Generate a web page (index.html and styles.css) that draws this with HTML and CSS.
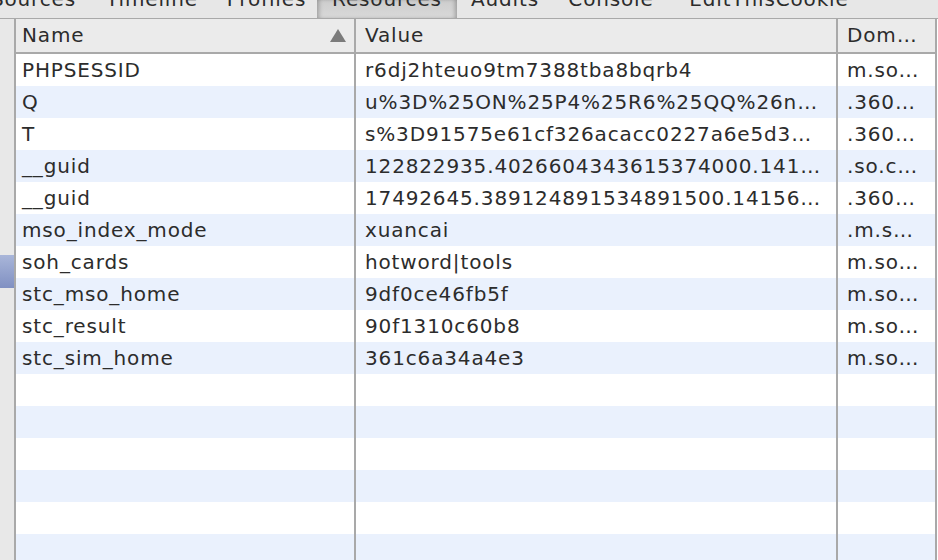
FILE: index.html
```
<!DOCTYPE html>
<html>
<head>
<meta charset="utf-8">
<link rel="stylesheet" href="styles.css">
</head>
<body>
<div class="tabs">
  <div class="tab t1">Sources</div>
  <div class="tab t2">Timeline</div>
  <div class="tab t3">Profiles</div>
  <div class="tab t4 active">Resources</div>
  <div class="tab t5">Audits</div>
  <div class="tab t6">Console</div>
  <div class="tab t7">EditThisCookie</div>
</div>
<div class="main">
  <div class="side"><div class="sel"></div></div>
  <div class="grid">
    <div class="row head">
      <div class="cell name">Name<svg class="sort" width="16" height="13" viewBox="0 0 16 13"><polygon points="8,0 16,13 0,13" fill="#7b7b7b"/></svg></div>
      <div class="cell">Value</div>
      <div class="cell">Dom…</div>
    </div>
    <div class="row"><div class="cell">PHPSESSID</div><div class="cell">r6dj2hteuo9tm7388tba8bqrb4</div><div class="cell">m.so.com</div></div>
    <div class="row"><div class="cell">Q</div><div class="cell">u%3D%25ON%25P4%25R6%25QQ%26n%3D%25FA%25B1</div><div class="cell">.360.cn</div></div>
    <div class="row"><div class="cell">T</div><div class="cell">s%3D91575e61cf326acacc0227a6e5d3085e%26t</div><div class="cell">.360.cn</div></div>
    <div class="row"><div class="cell">__guid</div><div class="cell">122822935.4026604343615374000.1415614537863.0</div><div class="cell">.so.com</div></div>
    <div class="row"><div class="cell">__guid</div><div class="cell">17492645.389124891534891500.1415614537874.0</div><div class="cell">.360.cn</div></div>
    <div class="row"><div class="cell">mso_index_mode</div><div class="cell">xuancai</div><div class="cell">.m.so.com</div></div>
    <div class="row"><div class="cell">soh_cards</div><div class="cell">hotword|tools</div><div class="cell">m.so.com</div></div>
    <div class="row"><div class="cell">stc_mso_home</div><div class="cell">9df0ce46fb5f</div><div class="cell">m.so.com</div></div>
    <div class="row"><div class="cell">stc_result</div><div class="cell">90f1310c60b8</div><div class="cell">m.so.com</div></div>
    <div class="row"><div class="cell">stc_sim_home</div><div class="cell">361c6a34a4e3</div><div class="cell">m.so.com</div></div>
    <div class="row"><div class="cell"></div><div class="cell"></div><div class="cell"></div></div>
    <div class="row"><div class="cell"></div><div class="cell"></div><div class="cell"></div></div>
    <div class="row"><div class="cell"></div><div class="cell"></div><div class="cell"></div></div>
    <div class="row"><div class="cell"></div><div class="cell"></div><div class="cell"></div></div>
    <div class="row"><div class="cell"></div><div class="cell"></div><div class="cell"></div></div>
    <div class="row"><div class="cell"></div><div class="cell"></div><div class="cell"></div></div>
  </div>
</div>
</body>
</html>
```
FILE: styles.css
```
html, body {
  margin: 0;
  padding: 0;
  width: 938px;
  height: 560px;
  overflow: hidden;
  background: #ffffff;
  font-family: "DejaVu Sans", sans-serif;
  font-size: 20px;
  letter-spacing: 0.85px;
  color: #2c2c2c;
}
.tabs {
  display: flex;
  height: 18px;
  overflow: hidden;
  background: #e7e7e7;
  border-bottom: 1px solid #a9a9a9;
  white-space: nowrap;
}
.tab {
  flex: none;
  text-align: center;
  line-height: 20px;
  height: 18px;
  overflow: hidden;
}
.tab::before {
  content: "";
  display: block;
  margin-top: -11px;
}
.t1 { width: 113px; margin-left: -25px; text-align: right; padding-right: 12px; box-sizing: border-box; }
.t2 { width: 128px; }
.t3 { width: 101px; }
.t4 { width: 140px; }
.t5 { width: 96px; }
.t6 { width: 116px; }
.t7 { width: 200px; }
.tab.active {
  background: linear-gradient(#cdcdcd, #d9d9d9);
  box-shadow: inset 4px 0 4px -2px rgba(0,0,0,0.25), inset -4px 0 4px -2px rgba(0,0,0,0.25);
}
.main {
  display: flex;
}
.side {
  flex: none;
  width: 14px;
  background: #e8e8e8;
  border-right: 2px solid #a9a9a9;
  padding-top: 236px;
  height: 560px;
}
.sel {
  height: 33px;
  background: linear-gradient(#a9b6d9, #8090c2);
}
.grid {
  flex: none;
  width: 921px;
}
.row {
  display: grid;
  grid-template-columns: 340px 482px 99px;
  height: 32px;
  line-height: 32px;
}
.row:nth-child(odd) {
  background: #eaf1fd;
}
.row.head {
  background: #ebebeb;
  height: 33px;
  line-height: 33px;
  border-bottom: 2px solid #a9a9a9;
}
.cell {
  border-right: 2px solid #a9a9a9;
  padding-left: 6px;
  padding-right: 14px;
  overflow: hidden;
  white-space: nowrap;
  text-overflow: ellipsis;
}
.row .cell:nth-child(2),
.row .cell:nth-child(3) {
  padding-left: 9px;
}
.cell.name {
  display: flex;
  align-items: center;
  justify-content: space-between;
  padding-right: 8px;
}
.sort {
  flex: none;
}
```
